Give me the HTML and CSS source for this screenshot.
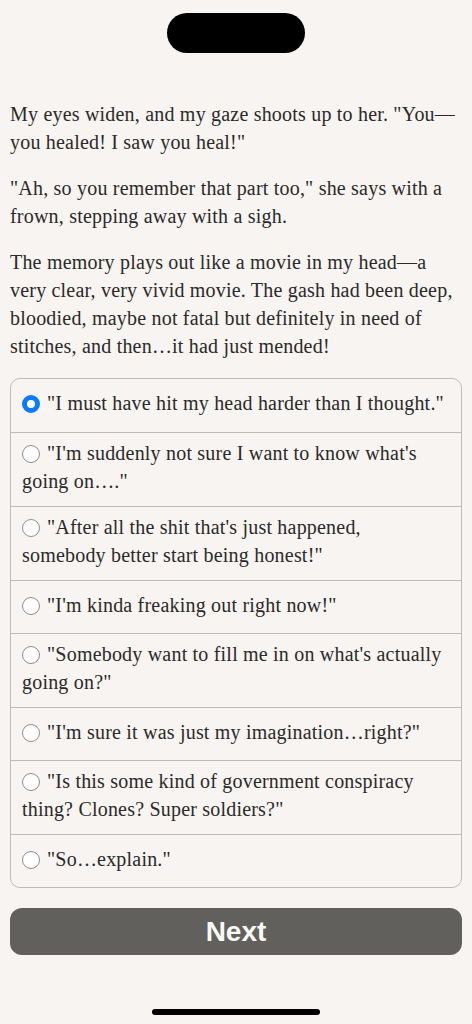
FILE: index.html
```html
<!DOCTYPE html>
<html lang="en">
<head>
<meta charset="utf-8">
<title>Story</title>
<link rel="stylesheet" href="styles.css">
</head>
<body>
<div class="screen">
  <div class="island"></div>
  <main class="content">
    <p class="para">My eyes widen, and my gaze shoots up to her. "You—you healed! I saw you heal!"</p>
    <p class="para">"Ah, so you remember that part too," she says with a frown, stepping away with a sigh.</p>
    <p class="para">The memory plays out like a movie in my head—a very clear, very vivid movie. The gash had been deep, bloodied, maybe not fatal but definitely in need of stitches, and then…it had just mended!</p>
    <div class="choices">
      <div class="choice"><span class="label"><span class="radio radio-on"></span>"I must have hit my head harder than I thought."</span></div>
      <div class="choice"><span class="label"><span class="radio"></span>"I'm suddenly not sure I want to know what's going on…."</span></div>
      <div class="choice"><span class="label"><span class="radio"></span>"After all the shit that's just happened, somebody better start being honest!"</span></div>
      <div class="choice"><span class="label"><span class="radio"></span>"I'm kinda freaking out right now!"</span></div>
      <div class="choice"><span class="label"><span class="radio"></span>"Somebody want to fill me in on what's actually going on?"</span></div>
      <div class="choice"><span class="label"><span class="radio"></span>"I'm sure it was just my imagination…right?"</span></div>
      <div class="choice"><span class="label"><span class="radio"></span>"Is this some kind of government conspiracy thing? Clones? Super soldiers?"</span></div>
      <div class="choice"><span class="label"><span class="radio"></span>"So…explain."</span></div>
    </div>
    <button class="next">Next</button>
  </main>
  <div class="home"></div>
</div>
</body>
</html>
```
FILE: styles.css
```css
html, body {
  margin: 0;
  padding: 0;
  background: #f7f4f1;
}
.screen {
  width: 472px;
  height: 1024px;
  display: flex;
  flex-direction: column;
  align-items: center;
  background: #f7f4f1;
}
.island {
  width: 138px;
  height: 40px;
  margin-top: 13px;
  border-radius: 20px;
  background: #000;
  flex: none;
}
.content {
  width: 452px;
  padding-top: 47px;
  flex: 1;
  font-family: "Liberation Serif", "Times New Roman", serif;
  font-size: 20px;
  line-height: 28px;
  letter-spacing: 0.2px;
  color: #2b2a29;
}
.para {
  margin: 0 0 18px;
}
.choices {
  margin-top: 5px;
  border: 1px solid #bdbcbb;
  border-radius: 10px;
}
.choice {
  min-height: 53px;
  box-sizing: border-box;
  padding: 6px 12px 11px 11px;
  display: flex;
  align-items: center;
}
.choice + .choice {
  border-top: 1.5px solid #bdbcbb;
}
.label {
  display: block;
}
.radio {
  display: inline-block;
  box-sizing: border-box;
  width: 18px;
  height: 18px;
  border-radius: 50%;
  border: 1.5px solid #8e8e8e;
  background: #fff;
  vertical-align: -3px;
  margin-right: 7px;
}
.radio-on {
  border: 5px solid #0a7aff;
}
.next {
  display: block;
  width: 452px;
  height: 47px;
  margin-top: 20px;
  border: none;
  border-radius: 12px;
  background: #62605d;
  color: #fbf9f6;
  font-family: "Liberation Sans", Arial, sans-serif;
  font-weight: bold;
  font-size: 28px;
  letter-spacing: 0;
}
.home {
  width: 168px;
  height: 6px;
  border-radius: 3px;
  background: #000;
  margin-bottom: 9px;
  flex: none;
}
```
